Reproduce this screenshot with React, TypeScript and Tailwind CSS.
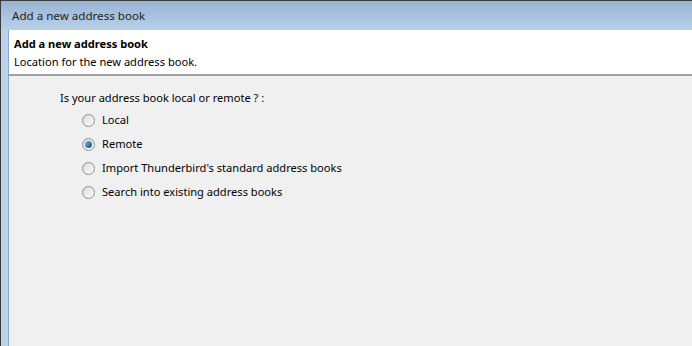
export default function App() {
  const options = [
    { label: "Local", checked: false },
    { label: "Remote", checked: true },
    { label: "Import Thunderbird's standard address books", checked: false },
    { label: "Search into existing address books", checked: false },
  ];

  return (
    <div
      className="w-[692px] h-[346px] overflow-hidden flex flex-col bg-[#bcd3ec] border-l border-t border-[#3c3c3c] text-[11.1px] text-black"
      style={{ fontFamily: '"Noto Sans", "Open Sans", sans-serif' }}
    >
      {/* Title bar */}
      <div className="h-[29px] shrink-0 flex items-center pl-[11px] pt-[1px] text-[11.6px] bg-gradient-to-b from-[#98b4d3] to-[#b9d1ea] text-[#1e1e1e]">
        Add a new address book
      </div>

      <div className="flex-1 flex flex-col ml-[7px] border-l border-[#8ea9c8]">
        {/* Header */}
        <div className="h-[46px] shrink-0 bg-white pl-[5px] pt-[5px] leading-[18px] border-b-2 border-[#a0a0a0]">
          <div className="font-bold">Add a new address book</div>
          <div>Location for the new address book.</div>
        </div>

        {/* Body */}
        <div className="flex-1 bg-[#f0f0f0] pl-[51px] pt-[13px]">
          <div className="leading-[18px]">Is your address book local or remote ? :</div>
          <div className="flex flex-col gap-[6px] mt-[4px] pl-[22px]">
            {options.map((o) => (
              <label key={o.label} className="flex items-center gap-[7px] h-[18px]">
                <span className="w-[13px] h-[13px] rounded-full border border-[#8f8f8f] bg-gradient-to-br from-[#dcdcdc] to-[#fafafa] flex items-center justify-center">
                  {o.checked && (
                    <span className="w-[7px] h-[7px] rounded-full bg-gradient-to-br from-[#7ab6ea] to-[#0d4a82]" />
                  )}
                </span>
                <span>{o.label}</span>
              </label>
            ))}
          </div>
        </div>
      </div>
    </div>
  );
}
